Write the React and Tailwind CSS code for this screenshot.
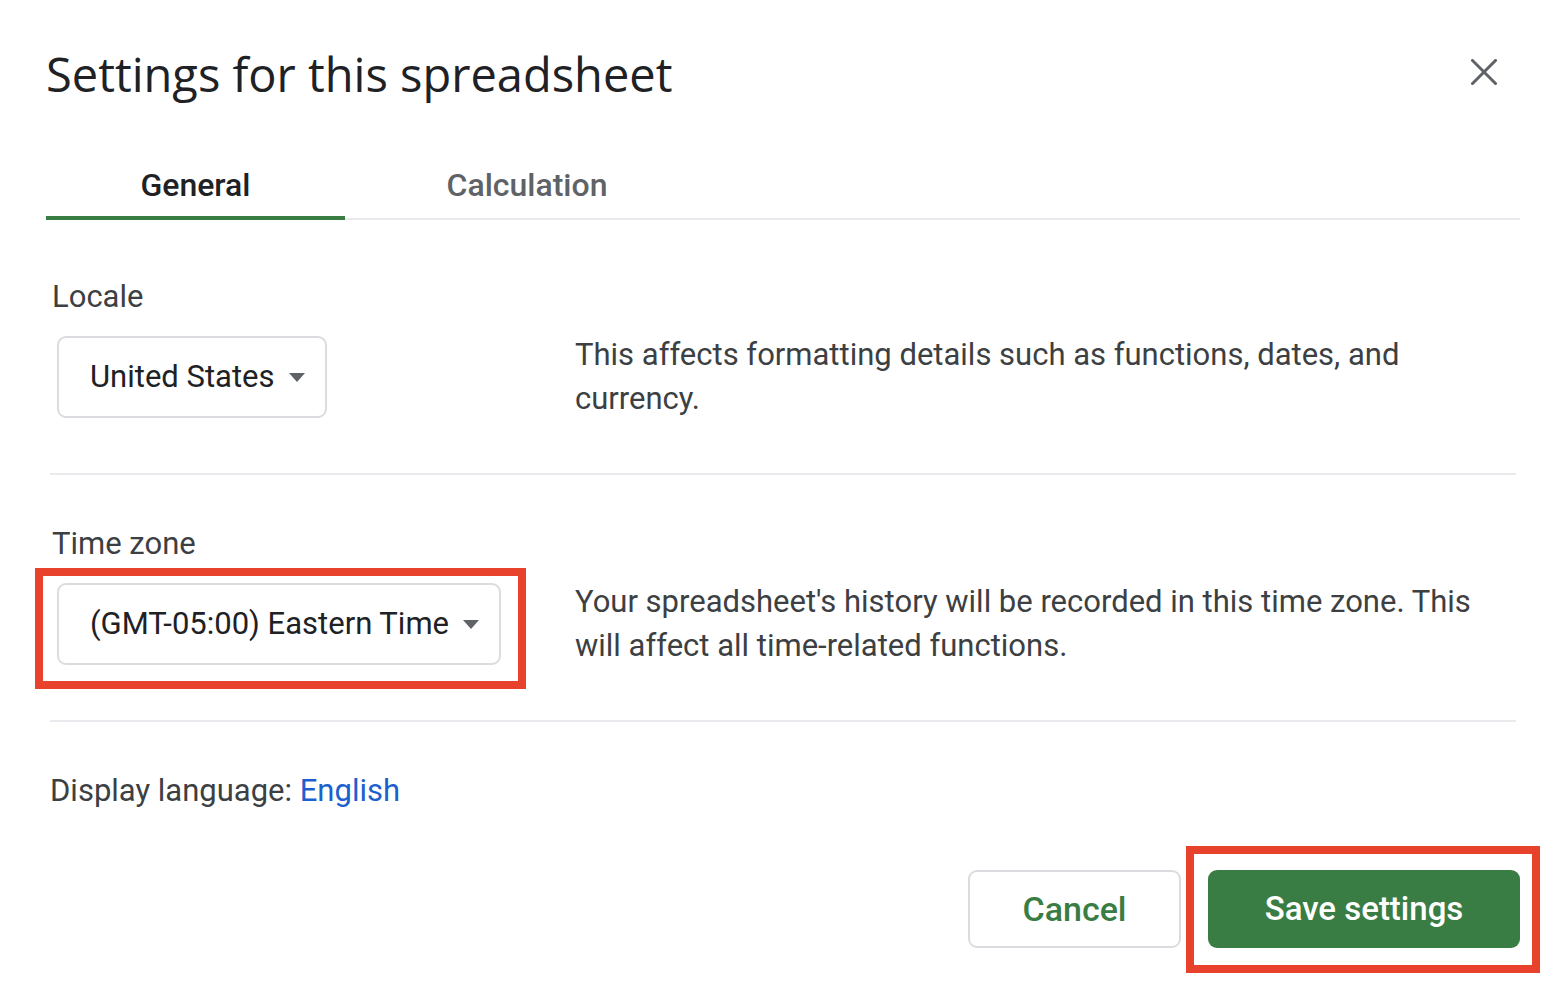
import React, { useState } from 'react';

const body = { fontFamily: 'Roboto, "Liberation Sans", sans-serif' };
const heading = { fontFamily: '"Open Sans", Roboto, sans-serif' };

const Caret = () => (
  <svg width="16" height="9" viewBox="0 0 16 9" className="shrink-0">
    <path d="M0 0 L16 0 L8 9 Z" fill="#5f6368" />
  </svg>
);

const CloseIcon = () => (
  <svg width="26" height="26" viewBox="0 0 26 26">
    <path d="M1.5 1.5 L24.5 24.5 M24.5 1.5 L1.5 24.5" stroke="#5f6368" strokeWidth="3" strokeLinecap="square" />
  </svg>
);

const Select = ({ value }) => (
  <button className="h-[82px] flex items-center gap-[14px] pl-[31px] pr-[20px] border-2 border-[#dadce0] rounded-[9px] bg-white text-[31px] text-[#202124]">
    <span>{value}</span>
    <Caret />
  </button>
);

const SettingRow = ({ label, value, description, highlight, top }) => (
  <div className={`${top} pb-[52px] border-b-2 border-[#e8eaed] mx-[4px]`}>
    <div className="pl-[2px] text-[31px] leading-[36px] text-[#3c4043]">{label}</div>
    <div className="flex items-center mt-[18px]">
      <div className="w-[525px] pl-[7px] shrink-0">
        <div className="relative inline-block">
          <Select value={value} />
          {highlight && (
            <div className="absolute -left-[22px] -right-[25px] -top-[15px] -bottom-[24px] border-[8px] border-[#e8412c] pointer-events-none" />
          )}
        </div>
      </div>
      <p className="w-[911px] text-[31px] leading-[44px] text-[#3c4043]">{description}</p>
    </div>
  </div>
);

export default function App() {
  const [tab, setTab] = useState('general');

  return (
    <div className="w-[1564px] h-[994px] bg-white overflow-hidden" style={body}>
      <div className="pl-[46px] pr-[44px] pt-[44px]">
        <div className="flex items-center justify-between">
          <h1 className="text-[47px] leading-[60px] text-[#202124]" style={heading}>
            Settings for this spreadsheet
          </h1>
          <div className="mr-[23px] mt-[-4px]">
            <CloseIcon />
          </div>
        </div>

        <div className="flex mt-[56px] border-b-2 border-[#e8eaed]">
          <button
            onClick={() => setTab('general')}
            className={`w-[299px] pt-[3px] pb-[9px] -mb-[2px] text-[32px] leading-[44px] font-medium border-b-4 ${tab === 'general' ? 'border-[#3a7d44] text-[#202124]' : 'border-transparent text-[#5f6368]'}`}
          >
            General
          </button>
          <button
            onClick={() => setTab('calculation')}
            className={`w-[364px] pt-[3px] pb-[9px] -mb-[2px] text-[32px] leading-[44px] font-medium border-b-4 ${tab === 'calculation' ? 'border-[#3a7d44] text-[#202124]' : 'border-transparent text-[#5f6368]'}`}
          >
            Calculation
          </button>
        </div>

        <SettingRow
          top="pt-[59px]"
          label="Locale"
          value="United States"
          description="This affects formatting details such as functions, dates, and currency."
        />
        <SettingRow
          top="pt-[51px]"
          label="Time zone"
          value="(GMT-05:00) Eastern Time"
          description="Your spreadsheet's history will be recorded in this time zone. This will affect all time-related functions."
          highlight
        />

        <div className="pt-[51px] pl-[4px] text-[31px] leading-[36px] text-[#3c4043]">
          Display language: <span className="text-[#1c5fce]">English</span>
        </div>

        <div className="flex justify-end gap-[27px] mt-[61px]">
          <button className="w-[213px] h-[78px] border-2 border-[#dadce0] rounded-[9px] text-[34px] font-medium text-[#3a7d44]">
            Cancel
          </button>
          <div className="relative">
            <button className="w-[312px] h-[78px] rounded-[9px] bg-[#3a7d44] text-[33px] font-medium text-white">
              Save settings
            </button>
            <div className="absolute -left-[22px] -right-[20px] -top-[24px] -bottom-[25px] border-[8px] border-[#e8412c] pointer-events-none" />
          </div>
        </div>
      </div>
    </div>
  );
}
